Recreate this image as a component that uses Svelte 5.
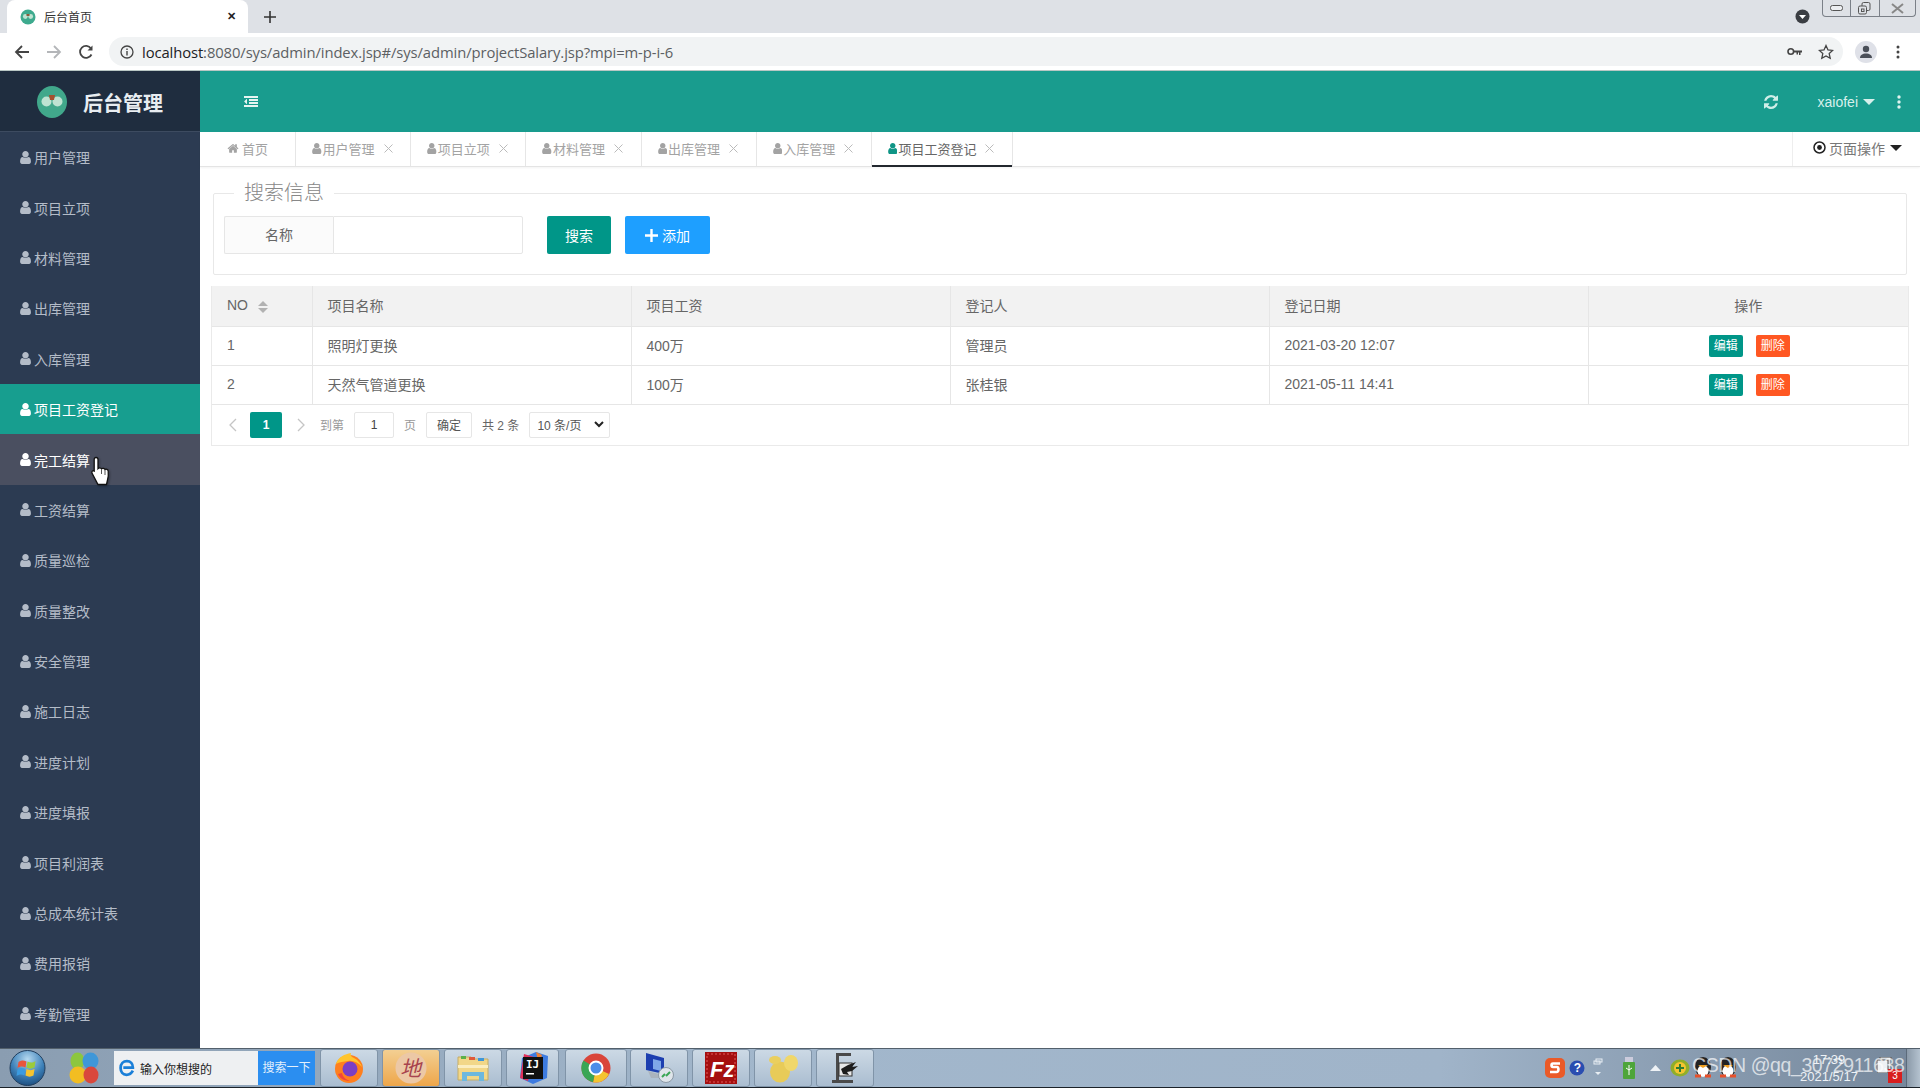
<script lang="ts">
  const menus = ['用户管理','项目立项','材料管理','出库管理','入库管理','项目工资登记','完工结算','工资结算','质量巡检','质量整改','安全管理','施工日志','进度计划','进度填报','项目利润表','总成本统计表','费用报销','考勤管理']
  const tabs = ['用户管理','项目立项','材料管理','出库管理','入库管理','项目工资登记']
  const rows = [
    { no: 1, name: '照明灯更换', pay: '400万', who: '管理员', date: '2021-03-20 12:07' },
    { no: 2, name: '天然气管道更换', pay: '100万', who: '张桂银', date: '2021-05-11 14:41' }
  ]
  const userPath = 'M1536 1399q0 109-62.500 187t-150.500 78h-854q-88 0-150.500-78t-62.500-187q0-85 8.500-160.500t31.500-152 58.500-131 94-89 134.500-34.500q131 128 313 128t313-128q76 0 134.500 34.500t94 89 58.500 131 31.500 152 8.500 160.500zm-256-887q0 159-112.500 271.500t-271.500 112.500-271.500-112.500-112.500-271.500 112.500-271.500 271.500-112.500 271.500 112.500 112.500 271.500z'
  const homePath = 'M1472 992v480q0 26-19 45t-45 19h-384v-384h-256v384h-384q-26 0-45-19t-19-45v-480q0-1 .5-3t.5-3l575-474 575 474q1 2 1 6zm223-69l-62 74q-8 9-21 11h-3q-13 0-21-7l-692-577-692 577q-12 8-24 7-13-2-21-11l-62-74q-8-10-7-23.500t11-21.500l719-599q32-26 76-26t76 26l244 204v-195q0-14 9-23t23-9h192q14 0 23 9t9 23v408l219 182q10 8 11 21.500t-7 23.500z'
  const syncPath = 'M1639 1056q0 5-1 7-64 268-268 434.500t-478 166.500q-146 0-282.500-55t-243.500-157l-129 129q-19 19-45 19t-45-19-19-45v-448q0-26 19-45t45-19h448q26 0 45 19t19 45-19 45l-137 137q71 66 161 102t187 36q134 0 250-65t186-179q11-17 53-117 8-23 30-23h192q13 0 22.500 9.500t9.500 22.500zm25-800v448q0 26-19 45t-45 19h-448q-26 0-45-19t-19-45 19-45l138-138q-148-137-349-137-134 0-250 65t-186 179q-11 17-53 117-8 23-30 23h-199q-13 0-22.500-9.500t-9.500-22.500v-7q65-268 270-434.500t480-166.500q146 0 284 55.500t245 156.500l130-129q19-19 45-19t45 19 19 45z'
  const foldPath = 'M384 544v576q0 13-9.500 22.500t-22.500 9.500q-14 0-23-9l-288-288q-9-9-9-23t9-23l288-288q9-9 23-9 13 0 22.500 9.500t9.500 22.500zm1408 768v192q0 13-9.500 22.500t-22.500 9.500h-1728q-13 0-22.500-9.500t-9.500-22.500v-192q0-13 9.500-22.500t22.500-9.500h1728q13 0 22.500 9.500t9.500 22.500zm0-384v192q0 13-9.500 22.500t-22.500 9.500h-1088q-13 0-22.500-9.500t-9.500-22.500v-192q0-13 9.500-22.500t22.500-9.500h1088q13 0 22.500 9.500t9.500 22.500zm0-384v192q0 13-9.500 22.500t-22.500 9.500h-1088q-13 0-22.500-9.500t-9.500-22.500v-192q0-13 9.500-22.500t22.500-9.500h1088q13 0 22.500 9.500t9.500 22.500zm0-384v192q0 13-9.500 22.500t-22.500 9.500h-1728q-13 0-22.500-9.500t-9.500-22.500v-192q0-13 9.500-22.500t22.500-9.500h1728q13 0 22.500 9.500t9.500 22.500z'
</script>

{#snippet user()}
  <svg class="u" viewBox="256 128 1280 1536"><path d={userPath} fill="currentColor" /></svg>
{/snippet}

{#snippet qq(cls)}
  <svg class={cls} width="20" height="24" viewBox="0 0 20 24"><ellipse cx="10" cy="11" rx="8" ry="10" fill="#222"/><ellipse cx="10" cy="15" rx="5.500" ry="6" fill="#fff"/><path d="M5 9h10l-5 3z" fill="#f0a020"/><path d="M2 20h6M12 20h6" stroke="#e8502a" stroke-width="3"/></svg>
{/snippet}

<div class="screen">
  <div class="chrome-tabs">
    <div class="ctab">
      <svg width="16" height="16" viewBox="0 0 16 16"><circle cx="8" cy="8" r="7.500" fill="#3eaa8e"/><circle cx="5.300" cy="7.500" r="2.400" fill="#bfe3d2"/><circle cx="10.700" cy="7.500" r="2.400" fill="#bfe3d2"/><rect x="6.500" y="5" width="3" height="2" fill="#8a5a3a"/></svg>
      <span class="ctab-title">后台首页</span>
      <span class="ctab-x">✕</span>
    </div>
    <svg class="cplus" width="12" height="12" viewBox="0 0 12 12"><path d="M6 0v12M0 6h12" stroke="#333" stroke-width="1.600"/></svg>
    <div class="cspacer"></div>
    <svg class="cdown" width="15" height="15" viewBox="0 0 15 15"><circle cx="7.500" cy="7.500" r="7" fill="#3a3d42"/><path d="M4 6h7l-3.500 4z" fill="#fff"/></svg>
    <div class="winbtns">
      <span><svg width="13" height="6" viewBox="0 0 13 6"><rect x=".5" y=".5" width="12" height="5" rx="2" fill="#eceef1" stroke="#555"/></svg></span>
      <span><svg width="13" height="13" viewBox="0 0 13 13"><rect x="4" y=".5" width="8" height="8" rx="1.500" fill="none" stroke="#555"/><rect x=".5" y="4" width="8" height="8" rx="1.500" fill="#dee1e6" stroke="#555"/><rect x="3.500" y="7" width="2.500" height="2.500" fill="none" stroke="#555"/></svg></span>
      <span class="wclose"><svg width="13" height="11" viewBox="0 0 13 11"><path d="M1 1l11 9M12 1L1 10" stroke="#888" stroke-width="2" fill="none"/></svg></span>
    </div>
  </div>

  <div class="toolbar">
    <svg class="nav" width="16" height="16" viewBox="0 0 16 16"><path d="M15 8H2M8 2L2 8l6 6" fill="none" stroke="#444" stroke-width="1.800"/></svg>
    <svg class="nav" width="16" height="16" viewBox="0 0 16 16"><path d="M1 8h13M8 2l6 6-6 6" fill="none" stroke="#b4b6b9" stroke-width="1.800"/></svg>
    <svg class="nav" width="16" height="16" viewBox="0 0 16 16"><path d="M13.500 10.500A6 6 0 1 1 13 4.500" fill="none" stroke="#444" stroke-width="1.800"/><path d="M14.500 1.500v5h-5z" fill="#444"/></svg>
    <div class="omni">
      <svg width="14" height="14" viewBox="0 0 14 14"><circle cx="7" cy="7" r="6" fill="none" stroke="#444" stroke-width="1.300"/><rect x="6.300" y="6" width="1.400" height="4.500" fill="#444"/><rect x="6.300" y="3.500" width="1.400" height="1.500" fill="#444"/></svg>
      <span class="url"><b>localhost</b>:8080/sys/admin/index.jsp#/sys/admin/projectSalary.jsp?mpi=m-p-i-6</span>
      <div class="cspacer"></div>
      <svg width="15" height="9" viewBox="0 0 15 9"><circle cx="3.800" cy="4.500" r="2.800" fill="none" stroke="#444" stroke-width="1.600"/><path d="M6.500 3.500H15v2h-1.500V8H12V5.500h-1V7.500H9.500v-2h-3z" fill="#444"/></svg>
      <svg class="star" width="16" height="16" viewBox="0 0 16 16"><path d="M8 1.500l2 4.400 4.700.5-3.500 3.200 1 4.700L8 11.900l-4.200 2.400 1-4.700L1.300 6.400 6 5.900z" fill="none" stroke="#444" stroke-width="1.300"/></svg>
    </div>
    <div class="avatar"><svg width="14" height="14" viewBox="0 0 14 14"><circle cx="7" cy="4" r="3.200" fill="#4a4f58"/><path d="M1 13c0-3 2.500-4.500 6-4.500s6 1.500 6 4.500z" fill="#4a4f58"/></svg></div>
    <svg class="kebab" width="4" height="14" viewBox="0 0 4 14"><circle cx="2" cy="2" r="1.500" fill="#444"/><circle cx="2" cy="7" r="1.500" fill="#444"/><circle cx="2" cy="12" r="1.500" fill="#444"/></svg>
  </div>

  <div class="app">
    <aside class="side">
      <div class="logo">
        <svg width="30" height="32" viewBox="0 0 30 32"><ellipse cx="15" cy="16" rx="15" ry="16" fill="#41a88b"/><circle cx="9.500" cy="15.500" r="5" fill="#bfe3d2"/><circle cx="20.500" cy="15.500" r="5" fill="#bfe3d2"/><path d="M12 9h6l-1 5h-4z" fill="#a4502e"/></svg>
        <span>后台管理</span>
      </div>
      <nav class="menu">
        {#each menus as m, i}
          <div class="mi" class:on={i === 5} class:hov={i === 6}>{@render user()}{m}</div>
        {/each}
      </nav>
    </aside>

    <main class="main">
      <header class="top">
        <svg class="fold" width="14" height="12" viewBox="0 128 1792 1536"><path d={foldPath} fill="#e6f5f2"/></svg>
        <div class="cspacer"></div>
        <svg class="sync" width="14" height="14" viewBox="128 128 1536 1536"><path d={syncPath} fill="#cfeee8"/></svg>
        <span class="uname">xaiofei</span>
        <i class="caret-w"></i>
        <svg class="hk" width="4" height="14" viewBox="0 0 4 14"><circle cx="2" cy="2" r="1.700" fill="#dff3ef"/><circle cx="2" cy="7" r="1.700" fill="#dff3ef"/><circle cx="2" cy="12" r="1.700" fill="#dff3ef"/></svg>
      </header>

      <div class="tabs">
        <div class="tab home">
          <svg class="h" viewBox="0 128 1792 1408"><path d={homePath} fill="currentColor"/></svg>首页
        </div>
        {#each tabs as t, i}
          <div class="tab" class:cur={i === 5}>
            {@render user()}{t}<svg class="x" width="9" height="9" viewBox="0 0 9 9"><path d="M.5.500l8 8M8.500.500l-8 8" stroke="currentColor"/></svg>
          </div>
        {/each}
        <div class="cspacer"></div>
        <div class="pageop">
          <svg width="13" height="13" viewBox="0 0 13 13"><circle cx="6.500" cy="6.500" r="5.500" fill="none" stroke="#222" stroke-width="1.500"/><circle cx="6.500" cy="6.500" r="2.400" fill="#222"/></svg>
          <span>页面操作</span>
          <i class="caret-d"></i>
        </div>
      </div>

      <div class="body">
        <fieldset class="search">
          <legend>搜索信息</legend>
          <div class="form-row">
            <div class="group">
              <label class="lab" for="nm">名称</label>
              <input id="nm" class="inp" type="text" />
            </div>
            <button class="btn green">搜索</button>
            <button class="btn blue"><svg width="13" height="13" viewBox="0 0 13 13"><path d="M6.500 0v13M0 6.500h13" stroke="#fff" stroke-width="2.400"/></svg>添加</button>
          </div>
        </fieldset>

        <div class="table-box">
          <table>
            <colgroup><col class="c-no"/><col class="c-w"/><col class="c-w"/><col class="c-w"/><col class="c-w"/><col /></colgroup>
            <thead>
              <tr>
                <th>NO<span class="sort"><i></i><i></i></span></th>
                <th>项目名称</th><th>项目工资</th><th>登记人</th><th>登记日期</th><th class="c">操作</th>
              </tr>
            </thead>
            <tbody>
              {#each rows as r}
                <tr>
                  <td>{r.no}</td><td>{r.name}</td><td>{r.pay}</td><td>{r.who}</td><td>{r.date}</td>
                  <td class="c ops"><span class="mini green">编辑</span><span class="mini red">删除</span></td>
                </tr>
              {/each}
            </tbody>
          </table>
          <div class="pager">
            <svg class="arr" width="8" height="14" viewBox="0 0 8 14"><path d="M7 1L1 7l6 6" fill="none" stroke="#c5c5c5" stroke-width="1.300"/></svg>
            <span class="pno">1</span>
            <svg class="arr r" width="8" height="14" viewBox="0 0 8 14"><path d="M1 1l6 6-6 6" fill="none" stroke="#c5c5c5" stroke-width="1.300"/></svg>
            <span class="pt">到第</span>
            <span class="pinp">1</span>
            <span class="pt">页</span>
            <span class="ok">确定</span>
            <span class="total">共 2 条</span>
            <span class="limit">10 条/页<svg width="10" height="7" viewBox="0 0 10 7"><path d="M1 1l4 4 4-4" fill="none" stroke="#222" stroke-width="2"/></svg></span>
          </div>
        </div>
      </div>
    </main>
  </div>

  <footer class="taskbar">
    <div class="orb"><svg width="37" height="36" viewBox="0 0 36 36"><defs><radialGradient id="o" cx=".5" cy=".25" r=".85"><stop offset="0" stop-color="#b5d9f0"/><stop offset=".55" stop-color="#3c80b8"/><stop offset="1" stop-color="#153f6e"/></radialGradient></defs><circle cx="18" cy="18" r="17.500" fill="url(#o)" stroke="#223f5e"/><path d="M9 12c3-2 5-2 8-.5l-1 6c-3-1.500-5-1.500-8 .5z" fill="#e8553c"/><path d="M18 11.500c3 1.500 5 1.500 8-.5l-1 6.500c-3 1.500-5 1.500-8 0z" fill="#9ccb3b"/><path d="M8 19.500c3-2 5-2 8-.5l-1 6.500c-3-1.500-5-1.500-8 .5z" fill="#3b9be0"/><path d="M17 19c3 1.500 5 1.500 8 0l-1 6.500c-3 1.500-5 1.500-8 0z" fill="#f6c42f"/></svg></div>
    <svg class="flower" width="30" height="32" viewBox="0 0 30 32"><ellipse cx="8.500" cy="9" rx="7" ry="8.500" fill="#8cc63f"/><ellipse cx="21.500" cy="9" rx="8" ry="8.500" fill="#3f97d8"/><ellipse cx="9" cy="23" rx="8.500" ry="8.500" fill="#f2bd22"/><ellipse cx="22" cy="23" rx="7.500" ry="8.500" fill="#d9483c"/></svg>
    <div class="tsearch">
      <svg width="19" height="20" viewBox="0 0 20 22"><path d="M17 14c-1.500 3-4 4.500-7 4.500-4 0-6.500-3-6.500-7.500S6.500 3.500 10.500 3.500s6.500 3 6.500 7H6.500" fill="none" stroke="#1a7fd8" stroke-width="3"/></svg>
      <span class="tinput">输入你想搜的</span>
      <span class="tgo">搜索一下</span>
    </div>
    <div class="tbtn"><svg width="30" height="32" viewBox="0 0 30 32"><circle cx="15" cy="17" r="14" fill="#ff7f1e"/><circle cx="16" cy="17" r="7.500" fill="#7b3fc4"/><path d="M2 12C4 5 11 2 17 1c-1 3 1 4 3 5 4 2 7 6 8 9-4-5-10-7-14-6-4 .5-9 1-12 3z" fill="#ffc52e"/><path d="M4 22c2 5 7 7 12 7-5-2-7-4-8-8z" fill="#f3443c"/></svg></div>
    <div class="tbtn warm"><svg width="34" height="34" viewBox="0 0 34 34"><circle cx="17" cy="17" r="15.500" fill="#ecc8a6"/><text x="6" y="25" class="sign">地</text></svg></div>
    <div class="tbtn"><svg width="32" height="28" viewBox="0 0 32 28"><path d="M1 3h13l2 2h15v21H1z" fill="#f2d788" stroke="#c4ac66"/><rect x="4" y="2" width="5" height="3" fill="#5bb04a"/><rect x="12" y="3" width="6" height="3" fill="#e05a3a"/><rect x="21" y="4" width="6" height="3" fill="#3f97d8"/><path d="M1 11h30v3H1z" fill="#fbeec0"/><path d="M5 18h22v9h-5v-5H10v5H5z" fill="#6db8de"/></svg></div>
    <div class="tbtn ij"><svg width="30" height="32" viewBox="0 0 30 32"><path d="M4 6L18 0l12 4-1 22-14 6L2 26z" fill="#3d7be0"/><path d="M2 26L6 2l10 3-6 24z" fill="#e0305a"/><path d="M18 0l6 3-3 10z" fill="#f08030"/><rect x="5" y="5" width="20" height="22" fill="#111"/><text x="8" y="16" class="ijt">IJ</text><rect x="8" y="21" width="8" height="1.500" fill="#fff"/></svg></div>
    <div class="tbtn chr"><svg width="30" height="30" viewBox="0 0 30 30"><circle cx="15" cy="15" r="14.500" fill="#d9453a"/><path d="M15 15L28 21A14.500 14.500 0 0 1 12 29.300z" fill="#f4c430"/><path d="M15 15L12 29.300A14.500 14.500 0 0 1 2.500 7.500z" fill="#3aa655"/><circle cx="15" cy="15" r="6.500" fill="#4a8de8" stroke="#fff" stroke-width="2"/></svg></div>
    <div class="tbtn"><svg width="32" height="32" viewBox="0 0 32 32"><path d="M3 1l18 5v16L3 18z" fill="#1d3fb0"/><path d="M10 7l8 2v10l-8-2z" fill="#7fa8e8"/><path d="M5 19l14 4v3H8z" fill="#aab3bd"/><circle cx="23" cy="23" r="7.500" fill="#dfe5ea" stroke="#8b98a5"/><path d="M19 25l3-3M23 24l4-4" stroke="#3aa655" stroke-width="2" fill="none"/></svg></div>
    <div class="tbtn"><svg width="32" height="32" viewBox="0 0 32 32"><rect width="32" height="32" fill="#a50f0f"/><rect x="2" y="2" width="28" height="28" fill="#a50f0f" stroke="#e25a5a" stroke-dasharray="2 2"/><text x="5" y="25" class="fz">Fz</text></svg></div>
    <div class="tbtn"><svg width="32" height="30" viewBox="0 0 32 30"><ellipse cx="13" cy="19" rx="10" ry="10.500" fill="#e8cb58"/><ellipse cx="8" cy="7" rx="6" ry="4" fill="#eacf5e"/><ellipse cx="24" cy="10" rx="7" ry="8" fill="#f0d76a"/></svg></div>
    <div class="tbtn"><svg width="30" height="32" viewBox="0 0 30 32"><path d="M6 1h15v3H9v24h14v3H2v-3h4z" fill="#4a4a4a"/><rect x="9" y="11" width="13" height="13" fill="#e8e8e8" stroke="#333"/><path d="M11 17l7-4 8-3-4 5 6-1-6 5-5 1 2 3-6-1z" fill="#1d1d1d"/></svg></div>
    <div class="cspacer"></div>
    <div class="tray">
      <svg class="t1" width="20" height="20" viewBox="0 0 20 20"><rect width="20" height="20" rx="5" fill="#ea5a28"/><path d="M15 5.500H8c-2 0-2 3.500 0 3.500h4c2 0 2 5-.5 5H5" fill="none" stroke="#fff" stroke-width="2.600"/></svg>
      <svg class="t2" width="16" height="16" viewBox="0 0 16 16"><circle cx="8" cy="8" r="7.500" fill="#2a4db0"/><text x="4.800" y="12" class="qm">?</text></svg>
      <svg class="t3" width="10" height="20" viewBox="0 0 10 20"><rect x="3" y="1" width="6" height="3" fill="none" stroke="#e8eef3"/><rect x="1" y="3" width="6" height="3" fill="none" stroke="#e8eef3"/><path d="M2 14h6l-3 3z" fill="#e8eef3"/></svg>
      <svg class="t4" width="12" height="22" viewBox="0 0 12 22"><rect x="2" y="0" width="8" height="5" fill="#ccd"/><rect y="5" width="12" height="17" rx="1" fill="#4ea53a"/><path d="M6 8v10M3 11l3 2 3-2" stroke="#fff" fill="none"/></svg>
      <svg class="t5" width="11" height="6" viewBox="0 0 11 6"><path d="M5.500 0L11 6H0z" fill="#eef2f6"/></svg>
      <svg class="t6" width="20" height="18" viewBox="0 0 20 18"><ellipse cx="10" cy="9" rx="9.500" ry="8.500" fill="#8fae2a"/><circle cx="10" cy="9" r="6" fill="#f4c430"/><path d="M10 5v8M6 9h8" stroke="#2e7d32" stroke-width="2"/></svg>
      {@render qq('t7')}
      {@render qq('t8')}
      <div class="clock"><span>17:39</span><span>2021/5/17</span></div>
      <div class="notif">
        <svg width="16" height="16" viewBox="0 0 16 16"><rect x="3" y="0" width="11" height="13" fill="#d8dde2" stroke="#555"/><rect x="0" y="3" width="11" height="13" fill="#eef1f4" stroke="#555"/></svg>
        <span class="badge">3</span>
      </div>
      <div class="showdesk"></div>
    </div>
  </footer>

  <svg class="cursor" width="24" height="32" viewBox="0 0 24 32"><path d="M6 1.500c1.200 0 2 .8 2 2v9c.8-1 3-1 3.500.3.800-.8 3-.6 3.500.7 1-.6 3-.2 3.200 1.500.2 2 .2 6-.7 9l-1 4.500H8L2.500 18c-1-1.500-.8-2.700.2-3.200 1-.4 1.800.2 1.500 1V3.500c0-1.200.8-2 1.800-2z" fill="#fff" stroke="#111" stroke-width="1.300"/><path d="M11.500 13v5M15 14v5" stroke="#555"/></svg>
  <div class="mark">CSDN @qq_3072911638</div>
</div>

<style>
  :global(body) {
    margin: 0;
    font-family: "Liberation Sans", "Noto Sans CJK SC", sans-serif;
    background: #fff;
  }

  .screen {
    width: 1920px;
    height: 1088px;
    position: relative;
    overflow: hidden;
    display: flex;
    flex-direction: column;
    color: #666;
    font-size: 14px;
  }

  .cspacer { flex: 1; }

  .chrome-tabs {
    height: 33px;
    background: #dee1e6;
    display: flex;
    align-items: flex-end;
    flex: none;
  }

  .ctab {
    width: 241px;
    height: 33px;
    margin-left: 7px;
    background: #fff;
    border-radius: 8px 8px 0 0;
    display: flex;
    align-items: center;
    box-sizing: border-box;
    padding: 0 12px 0 13px;
    font-size: 12px;
    color: #333;
  }

  .ctab-title { margin-left: 8px; flex: 1; }
  .ctab-x { font-size: 11px; color: #222; font-weight: 700; }
  .cplus { margin: 0 0 10px 16px; }
  .cdown { margin: 0 1px 9px 0; }

  .winbtns {
    align-self: flex-start;
    display: flex;
    width: 92px;
    height: 16px;
    margin: 0 4px 0 11px;
    border: 1px solid #7b8088;
    border-top: none;
    border-radius: 0 0 4px 4px;
  }

  .winbtns span {
    flex: 1;
    display: flex;
    align-items: center;
    justify-content: center;
    border-right: 1px solid #7b8088;
    overflow: hidden;
  }

  .winbtns .wclose { flex: 1.3; border-right: none; }

  .toolbar {
    height: 38px;
    background: #fff;
    display: flex;
    align-items: center;
    flex: none;
    padding-left: 14px;
    box-sizing: border-box;
    border-bottom: 1px solid #b9c7c4;
  }

  .nav { margin-right: 16px; }

  .omni {
    width: 1734px;
    height: 29px;
    margin-left: -1px;
    background: #f1f3f4;
    border-radius: 15px;
    display: flex;
    align-items: center;
    padding: 0 9px 0 11px;
    box-sizing: border-box;
    flex: none;
  }

  .url {
    margin-left: 8px;
    font-family: "Open Sans", sans-serif;
    font-size: 14.8px;
    color: #5c5f63;
    letter-spacing: -0.1px;
  }

  .url b { font-weight: 400; color: #202124; }
  .star { margin-left: 16px; }

  .avatar {
    width: 22px;
    height: 22px;
    border-radius: 50%;
    background: #dfe1e8;
    margin-left: 12px;
    display: flex;
    align-items: center;
    justify-content: center;
    flex: none;
  }

  .kebab { margin-left: 19px; }

  .app { flex: 1; display: flex; min-height: 0; }

  .side {
    width: 200px;
    flex: none;
    background: #2c3b52;
    display: flex;
    flex-direction: column;
    overflow: hidden;
  }

  .logo {
    height: 61px;
    flex: none;
    background: #1f2d3f;
    border-bottom: 1px solid #3d4b60;
    box-sizing: border-box;
    display: flex;
    align-items: center;
    padding: 2px 0 0 37px;
    gap: 16px;
    color: #e8edf1;
    font-size: 20px;
    font-weight: 700;
  }

  .mi {
    height: 50.4px;
    display: flex;
    align-items: center;
    padding-left: 20px;
    color: #b4bcc8;
    font-size: 14px;
  }

  .mi .u { width: 11px; height: 13px; margin-right: 3px; }
  .mi.on { background: #179e8f; color: #fff; }
  .mi.hov { background: #4a4f60; color: #fff; }

  .main { flex: 1; display: flex; flex-direction: column; min-width: 0; }

  .top {
    height: 61px;
    flex: none;
    background: #199c8e;
    display: flex;
    align-items: center;
    padding-left: 44px;
    padding-right: 19px;
  }

  .sync { margin-right: 40px; }
  .uname { color: #d7f0ec; font-size: 14px; }

  .caret-w {
    margin: 0 0 0 5px;
    border-left: 6px solid transparent;
    border-right: 6px solid transparent;
    border-top: 6px solid #d7f0ec;
  }

  .hk { margin-left: 22px; }

  .tabs {
    height: 35px;
    flex: none;
    display: flex;
    align-items: stretch;
    background: #fff;
    border-bottom: 1px solid #e4e4e4;
    box-sizing: border-box;
    box-shadow: 0 1px 2px rgba(0, 0, 0, 0.05);
  }

  .tab {
    width: 115.200px;
    box-sizing: border-box;
    padding: 0 0 2px 16px;
    display: flex;
    align-items: center;
    border-right: 1px solid #e6e6e6;
    color: #a3a3a3;
    font-size: 13px;
    position: relative;
    flex: none;
  }

  .tab .u { width: 9.500px; height: 11px; margin-right: 1px; }
  .tab .h { width: 12px; height: 10px; margin-right: 3px; }
  .tab.home { width: 96px; padding-left: 27px; }
  .tab .x { margin-left: 9px; color: #bbb; }
  .tab.cur { width: 141px; color: #666; }
  .tab.cur .u { color: #0f9586; }
  .tab.cur::after {
    content: '';
    position: absolute;
    left: 0;
    right: 0;
    bottom: -1px;
    height: 2px;
    background: #22272e;
  }

  .pageop {
    width: 128px;
    border-left: 1px solid #eee;
    display: flex;
    align-items: center;
    padding: 0 0 3px 20px;
    box-sizing: border-box;
    color: #777;
    gap: 3px;
  }

  .caret-d {
    margin-left: 2px;
    border-left: 6px solid transparent;
    border-right: 6px solid transparent;
    border-top: 6px solid #222;
  }

  .body { flex: 1; padding: 16px 11px 0 11px; }

  .search {
    margin: 0 2px;
    padding: 0 10px;
    border: 1px solid #e8e8e8;
    border-radius: 2px;
    height: 92px;
    box-sizing: border-box;
    position: relative;
  }

  .search legend {
    margin-left: 10px;
    padding: 0 10px;
    font-size: 20px;
    font-weight: 300;
    color: #888;
    line-height: 20px;
  }

  .form-row { display: flex; margin-top: 13px; }
  .group { display: flex; width: 299px; height: 38px; }

  .lab {
    width: 109px;
    height: 38px;
    box-sizing: border-box;
    background: #fbfbfb;
    border: 1px solid #e6e6e6;
    border-right: none;
    border-radius: 2px 0 0 2px;
    text-align: center;
    line-height: 36px;
    color: #666;
  }

  .inp {
    flex: 1;
    min-width: 0;
    border: 1px solid #e6e6e6;
    background: #fff;
    box-sizing: border-box;
    border-radius: 0 2px 2px 0;
    outline: none;
  }

  .btn {
    height: 38px;
    border: none;
    border-radius: 2px;
    color: #fff;
    font: inherit;
    font-size: 14px;
    display: flex;
    align-items: center;
    justify-content: center;
    padding: 0;
  }

  .btn.green { width: 64px; margin-left: 24px; background: #009688; }
  .btn.blue { width: 85px; margin-left: 14px; background: #1e9fff; gap: 4px; }

  .table-box {
    margin-top: 11px;
    border: 1px solid #eaeaea;
    border-top: none;
  }

  table {
    width: 100%;
    border-collapse: collapse;
    table-layout: fixed;
  }

  .c-no { width: 100px; }
  .c-w { width: 319px; }

  th {
    height: 40px;
    padding: 0 15px 1px;
    box-sizing: border-box;
    background: #f2f2f2;
    font-weight: 400;
    text-align: left;
    color: #666;
    border-right: 1px solid #e6e6e6;
    border-bottom: 1px solid #e6e6e6;
  }

  td {
    height: 39px;
    padding: 0 15px 2px;
    box-sizing: border-box;
    border-right: 1px solid #e6e6e6;
    border-bottom: 1px solid #e6e6e6;
    color: #666;
  }

  th:last-child, td:last-child { border-right: none; }
  .c { text-align: center; }

  .sort {
    display: inline-flex;
    flex-direction: column;
    gap: 2px;
    margin-left: 10px;
    vertical-align: middle;
  }

  .sort i {
    border-left: 5px solid transparent;
    border-right: 5px solid transparent;
    border-bottom: 5px solid #b2b2b2;
  }

  .sort i:last-child { border-bottom: none; border-top: 5px solid #b2b2b2; }

  .ops { padding: 0 0 0 2px; }

  .mini {
    display: inline-block;
    width: 34px;
    height: 22px;
    line-height: 22px;
    font-size: 12px;
    color: #fff;
    border-radius: 2px;
    text-align: center;
    vertical-align: middle;
  }

  .mini.green { background: #009688; }
  .mini.red { background: #ff5722; margin-left: 13px; }

  .pager {
    height: 40px;
    display: flex;
    align-items: center;
    padding-left: 17px;
    font-size: 12px;
    color: #999;
  }

  .pno {
    width: 32px;
    height: 26px;
    margin-left: 13px;
    background: #009688;
    color: #fff;
    line-height: 26px;
    text-align: center;
    border-radius: 2px;
    font-weight: 700;
  }

  .arr.r { margin-left: 15px; }
  .pt { margin-left: 15px; }

  .pinp {
    width: 40px;
    height: 26px;
    margin-left: 10px;
    box-sizing: border-box;
    border: 1px solid #e6e6e6;
    border-radius: 2px;
    line-height: 24px;
    text-align: center;
    color: #444;
  }

  .pinp + .pt { margin-left: 10px; }

  .ok {
    width: 46px;
    height: 26px;
    margin-left: 10px;
    box-sizing: border-box;
    border: 1px solid #e6e6e6;
    border-radius: 2px;
    line-height: 26px;
    text-align: center;
    color: #555;
  }

  .total { margin-left: 10px; color: #666; }

  .limit {
    width: 81px;
    height: 26px;
    margin-left: 10px;
    box-sizing: border-box;
    border: 1px solid #e6e6e6;
    border-radius: 2px;
    display: flex;
    align-items: center;
    justify-content: space-between;
    padding: 0 5px 0 7px;
    color: #555;
  }

  .taskbar {
    height: 40px;
    flex: none;
    display: flex;
    align-items: center;
    background: linear-gradient(90deg, #8a9db1 0, #a2b7cc 40%, #a0b4c9 75%, #75879b 100%);
    border-top: 1px solid #53606c;
    border-bottom: 1px solid #1b2229;
    box-sizing: border-box;
    position: relative;
  }

  .orb { width: 37px; height: 36px; margin-left: 9px; }
  .flower { margin-left: 23px; }

  .tsearch {
    width: 201px;
    height: 34px;
    margin-left: 15px;
    margin-right: 5px;
    background: #eef0f2;
    display: flex;
    align-items: center;
    padding-left: 3px;
    box-sizing: border-box;
    font-size: 12px;
    color: #222;
  }

  .tinput { flex: 1; margin-left: 4px; }

  .tgo {
    width: 57px;
    height: 34px;
    background: #2b8ef0;
    color: #e4f0fb;
    line-height: 34px;
    text-align: center;
  }

  .tbtn {
    width: 58px;
    height: 38px;
    margin-right: 4px;
    display: flex;
    align-items: center;
    justify-content: center;
    background: linear-gradient(180deg, #ccd9e5, #aabdd0);
    border-radius: 3px;
    border: 1px solid #8094a8;
    box-sizing: border-box;
    flex: none;
  }

  .tbtn.warm { background: linear-gradient(180deg, #f3cf92, #eea64a); }
  .tbtn.ij { width: 53px; margin-right: 6px; }
  .tbtn.chr { width: 62px; margin-right: 3px; }
  .ijt { font-size: 11px; font-weight: 700; fill: #fff; font-family: "DejaVu Sans Mono", monospace; }
  .qm { font-size: 12px; font-weight: 700; fill: #fff; }
  .fz { font-size: 22px; font-weight: 700; font-style: italic; fill: #fff; }
  .sign { font-size: 21px; fill: #a8434e; font-style: italic; }

  .tray { display: flex; align-items: center; height: 100%; }
  .t1 { margin-right: 4px; }
  .t2 { margin-right: 8px; }
  .t3 { margin-right: 20px; }
  .t4 { margin-right: 14.500px; }
  .t5 { margin-right: 9.500px; }
  :global(.t6) { margin-right: 3px; }
  :global(.t7) { margin-right: 5px; }
  :global(.t8) { margin-right: 46px; }

  .clock {
    width: 90px;
    display: flex;
    flex-direction: column;
    align-items: center;
    color: #eef2f6;
    font-size: 13px;
    line-height: 17px;
  }

  .notif { position: relative; margin-left: 2px; width: 26px; height: 30px; }
  .notif svg { position: absolute; left: 1px; top: 4px; }

  .badge {
    position: absolute;
    right: 0;
    bottom: 0;
    width: 14px;
    height: 14px;
    background: #d81e1e;
    color: #fff;
    font-size: 10px;
    line-height: 14px;
    text-align: center;
  }

  .showdesk {
    width: 14px;
    height: 100%;
    margin-left: 4px;
    background: linear-gradient(90deg, #8b9aa9, #b4c2cf);
    border-left: 1px solid #5c6b7a;
    box-sizing: border-box;
  }

  .cursor {
    position: absolute;
    left: 90px;
    top: 456px;
    filter: drop-shadow(1px 1px 1px rgba(0, 0, 0, 0.3));
  }

  .mark {
    position: absolute;
    left: 1692px;
    top: 1054px;
    font-size: 19.500px;
    letter-spacing: -0.4px;
    color: rgba(255, 255, 255, 0.7);
    white-space: nowrap;
  }
</style>
